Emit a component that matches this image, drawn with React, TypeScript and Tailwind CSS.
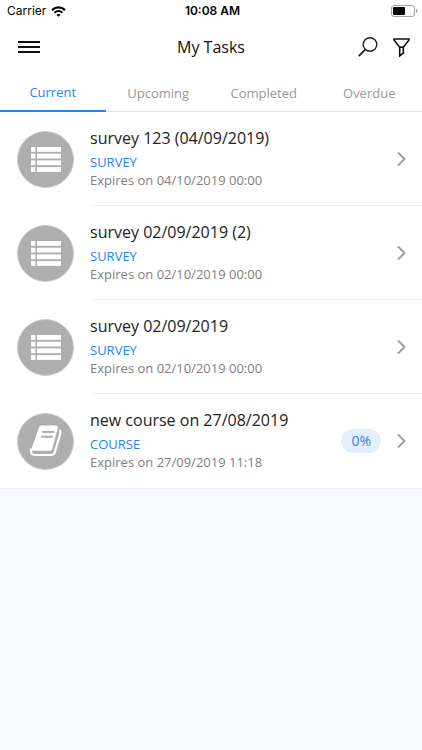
import React, { useState } from 'react';

type TaskType = 'SURVEY' | 'COURSE';

interface Task {
  id: number;
  title: string;
  type: TaskType;
  expires: string;
  progress?: number;
}

const TABS = ['Current', 'Upcoming', 'Completed', 'Overdue'];

const TASKS: Task[] = [
  { id: 1, title: 'survey 123 (04/09/2019)', type: 'SURVEY', expires: '04/10/2019 00:00' },
  { id: 2, title: 'survey 02/09/2019 (2)', type: 'SURVEY', expires: '02/10/2019 00:00' },
  { id: 3, title: 'survey 02/09/2019', type: 'SURVEY', expires: '02/10/2019 00:00' },
  { id: 4, title: 'new course on 27/08/2019', type: 'COURSE', expires: '27/09/2019 11:18', progress: 0 },
];

const WifiIcon = () => (
  <svg width="15" height="11" viewBox="0 0 15 11" fill="none" stroke="#000" aria-hidden="true">
    <path d="M1 4.1C4.8 0.5 10.2 0.5 14 4.1" strokeWidth="2.2" />
    <path d="M3.5 6.8C5.9 4.7 9.1 4.7 11.5 6.8" strokeWidth="2" />
    <path d="M7.5 10.8L5.3 8.7C6.6 7.6 8.4 7.6 9.7 8.7Z" fill="#000" stroke="none" />
  </svg>
);

const BatteryIcon = () => (
  <svg width="27" height="12" viewBox="0 0 27 12" fill="none" aria-hidden="true">
    <rect x="0.5" y="0.5" width="23" height="11" rx="2.5" stroke="#a3a3a3" />
    <rect x="2" y="2" width="12" height="8" rx="1" fill="#000" />
    <path d="M25 4v4c1-.4 1.4-1.2 1.4-2s-.4-1.6-1.4-2z" fill="#a3a3a3" />
  </svg>
);

const SearchIcon = () => (
  <svg width="20" height="20" viewBox="0 0 20 20" fill="none" stroke="#222" aria-hidden="true">
    <circle cx="12" cy="7.5" r="6.8" strokeWidth="1.4" />
    <path d="M7 12.8L0.8 19" strokeWidth="1.8" />
  </svg>
);

const FilterIcon = () => (
  <svg width="17" height="19" viewBox="0 0 17 19" fill="none" stroke="#111" strokeWidth="1.6" aria-hidden="true">
    <path d="M1 1h15v1L10.3 9.2v6L6.7 18V9.2L1 2z" />
    <path d="M6.7 9.2h3.6" />
  </svg>
);

const SurveyIcon = () => (
  <svg width="30" height="25" viewBox="0 0 30 25" fill="#fff" aria-hidden="true">
    {[0, 6.7, 13.4, 20.1].map((y) => (
      <g key={y}>
        <rect x="0" y={y} width="4.4" height="4.8" />
        <rect x="6" y={y} width="24" height="4.8" />
      </g>
    ))}
  </svg>
);

const CourseIcon = () => (
  <svg width="34" height="34" viewBox="0 0 34 34" fill="none" aria-hidden="true">
    <path
      d="M12.5 1.5h14.5c1.6 0 2.3 1 1.9 2.3L23.2 25c-.3 1.1-1.2 1.7-2.3 1.7H4.3c-1.5 0-2.2-.8-1.7-2.3L10 3.3c.5-1.2 1.3-1.8 2.5-1.8z"
      fill="#fff"
    />
    <path d="M2.3 24.5c-1 4 .2 6.5 3.2 6.5h16.5c1.9 0 3.2-.8 3.8-2.8l5.6-19c.4-1.3.1-2.2-.9-3" stroke="#fff" strokeWidth="2.2" />
    <path d="M13.2 8h12M11.8 12.7h12" stroke="#aeaeae" strokeWidth="1.9" />
  </svg>
);

const ChevronIcon = () => (
  <svg width="9" height="16" viewBox="0 0 9 16" fill="none" stroke="#a0a0a0" strokeWidth="2" aria-hidden="true">
    <path d="M1 1.5L7.5 8L1 14.5" />
  </svg>
);

const TaskRow: React.FC<{ task: Task }> = ({ task }) => (
  <li className="group">
    <button className="flex w-full items-center pl-[17px] text-left">
      <span className="mr-4 flex size-[57px] shrink-0 items-center justify-center rounded-full border border-[#c8ccd2] bg-[#aeaeae]">
        {task.type === 'SURVEY' ? <SurveyIcon /> : <CourseIcon />}
      </span>
      <span className="flex min-w-0 grow items-center border-b border-[#f0f0f0] pr-4 group-last:border-transparent">
        <span className="min-w-0 grow pt-[14px] pb-[15px]">
          <span className="block text-[16px] leading-6 text-[#222]">{task.title}</span>
          <span className="block pt-1 text-[13px] leading-4 text-[#2484f5]">{task.type}</span>
          <span className="block text-[13px] leading-5 text-[#808080]">Expires on {task.expires}</span>
        </span>
        {task.progress !== undefined && (
          <span className="mr-4 rounded-full bg-[#e3effd] px-[10px] text-[14px] leading-6 text-[#3b82d6]">
            {task.progress}%
          </span>
        )}
        <ChevronIcon />
      </span>
    </button>
  </li>
);

const App: React.FC = () => {
  const [activeTab, setActiveTab] = useState('Current');

  return (
    <div className="min-h-screen bg-[#f7f9fe] font-['Open_Sans','Noto_Sans',sans-serif]">
      <header className="bg-white">
        <div className="grid h-[22px] grid-cols-3 items-center pr-1 pl-[7px] font-[Inter,sans-serif] text-[12px] leading-4 text-black">
          <div className="flex items-center gap-[5px]">
            Carrier
            <WifiIcon />
          </div>
          <div className="text-center font-semibold">10:08 AM</div>
          <div className="flex justify-end">
            <BatteryIcon />
          </div>
        </div>

        <div className="grid h-[50px] grid-cols-3 items-center px-3">
          <button aria-label="Menu" className="ml-[6px] flex w-[22px] flex-col gap-[3px]">
            <span className="h-[2px] bg-[#111]" />
            <span className="h-[2px] bg-[#111]" />
            <span className="h-[2px] bg-[#111]" />
          </button>
          <h1 className="text-center text-[16px] leading-6 text-[#111]">My Tasks</h1>
          <div className="flex items-center justify-end gap-[15px]">
            <button aria-label="Search">
              <SearchIcon />
            </button>
            <button aria-label="Filter">
              <FilterIcon />
            </button>
          </div>
        </div>

        <nav className="grid grid-cols-4">
          {TABS.map((tab) => (
            <button
              key={tab}
              onClick={() => setActiveTab(tab)}
              className={`h-10 pt-[2px] text-[13px] leading-5 ${
                activeTab === tab
                  ? 'border-b-2 border-[#2484f5] text-[#2484f5]'
                  : 'border-b border-[#e4e4e4] text-[#999]'
              }`}
            >
              {tab}
            </button>
          ))}
        </nav>
      </header>

      <main>
        <ul className="border-b border-[#eef0f4] bg-white">
          {TASKS.map((task) => (
            <TaskRow key={task.id} task={task} />
          ))}
        </ul>
      </main>
    </div>
  );
};

export default App;
